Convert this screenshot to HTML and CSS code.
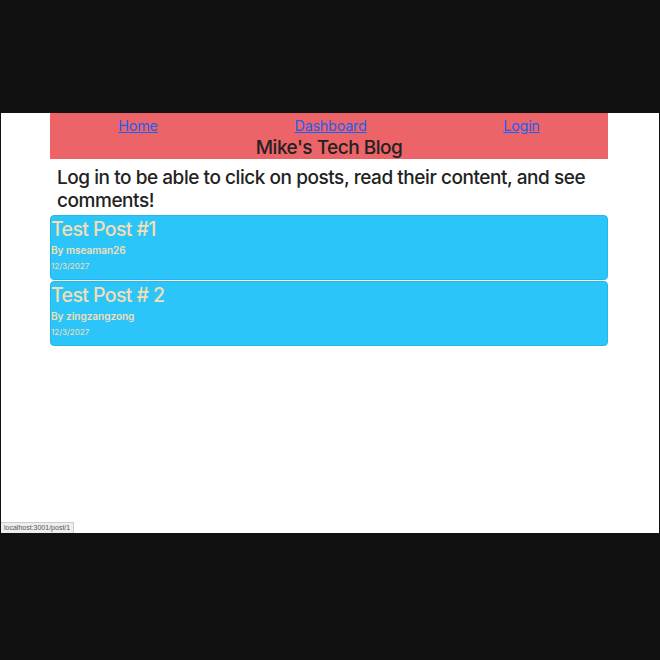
FILE: index.html
```html
<!DOCTYPE html>
<html lang="en">
<head>
<meta charset="utf-8">
<title>Mike's Tech Blog</title>
<link rel="stylesheet" href="styles.css">
</head>
<body>
<div class="window">
  <div class="container">
    <header class="header">
      <nav class="nav">
        <a href="#">Home</a>
        <a href="#">Dashboard</a>
        <a href="#">Login</a>
      </nav>
      <h1 class="title">Mike's Tech Blog</h1>
    </header>
    <p class="notice">Log in to be able to click on posts, read their content, and see comments!</p>
    <div class="post">
      <h2 class="post-title">Test Post #1</h2>
      <p class="post-author">By mseaman26</p>
      <p class="post-date">12/3/2027</p>
    </div>
    <div class="post">
      <h2 class="post-title">Test Post # 2</h2>
      <p class="post-author">By zingzangzong</p>
      <p class="post-date">12/3/2027</p>
    </div>
  </div>
  <div class="status">localhost:3001/post/1</div>
</div>
</body>
</html>
```

FILE: styles.css
```css
html, body {
  margin: 0;
  padding: 0;
  background: #111111;
}
body {
  width: 660px;
  height: 660px;
  font-family: Inter, "Noto Sans", sans-serif;
}
.window {
  position: relative;
  margin: 113px 1px 0 1px;
  height: 420px;
  background: #ffffff;
}
.container {
  margin-left: 49px;
  width: 558px;
}
.header {
  background: #ec6468;
  height: 46px;
  display: flex;
  flex-direction: column;
}
.nav {
  display: flex;
  justify-content: space-around;
  height: 24px;
  align-items: center;
  font-size: 14.5px;
  letter-spacing: -0.3px;
}
.nav a {
  color: #1f5ef0;
  text-decoration: underline;
}
.title {
  margin: 0;
  text-align: center;
  font-size: 19px;
  font-weight: 500;
  letter-spacing: -0.5px;
  color: #222;
  line-height: 22px;
}
.notice {
  margin: 0;
  padding: 7px 0 0 7px;
  font-size: 19px;
  font-weight: 500;
  letter-spacing: -0.45px;
  line-height: 23px;
  color: #222;
  height: 56px;
  box-sizing: border-box;
}
.post {
  background: #2cc5fa;
  border: 1px solid #28b5e8;
  border-radius: 4px;
  height: 65px;
  box-sizing: border-box;
  margin-bottom: 1px;
  color: wheat;
}
.post-title {
  margin: 0;
  font-size: 19.5px;
  font-weight: 500;
  letter-spacing: -0.6px;
  line-height: 26px;
}
.post-author {
  margin: 0;
  font-size: 10px;
  font-weight: 600;
  line-height: 16px;
}
.post-date {
  margin: 0;
  font-size: 8px;
  line-height: 16px;
}
.status {
  position: absolute;
  left: 0;
  bottom: 0;
  padding: 0 3px;
  height: 10px;
  line-height: 10px;
  font-size: 7px;
  color: #555;
  background: #eeeeee;
  border: 1px solid #cccccc;
  border-bottom: none;
  border-left: none;
  font-family: "Liberation Sans", sans-serif;
}
```
